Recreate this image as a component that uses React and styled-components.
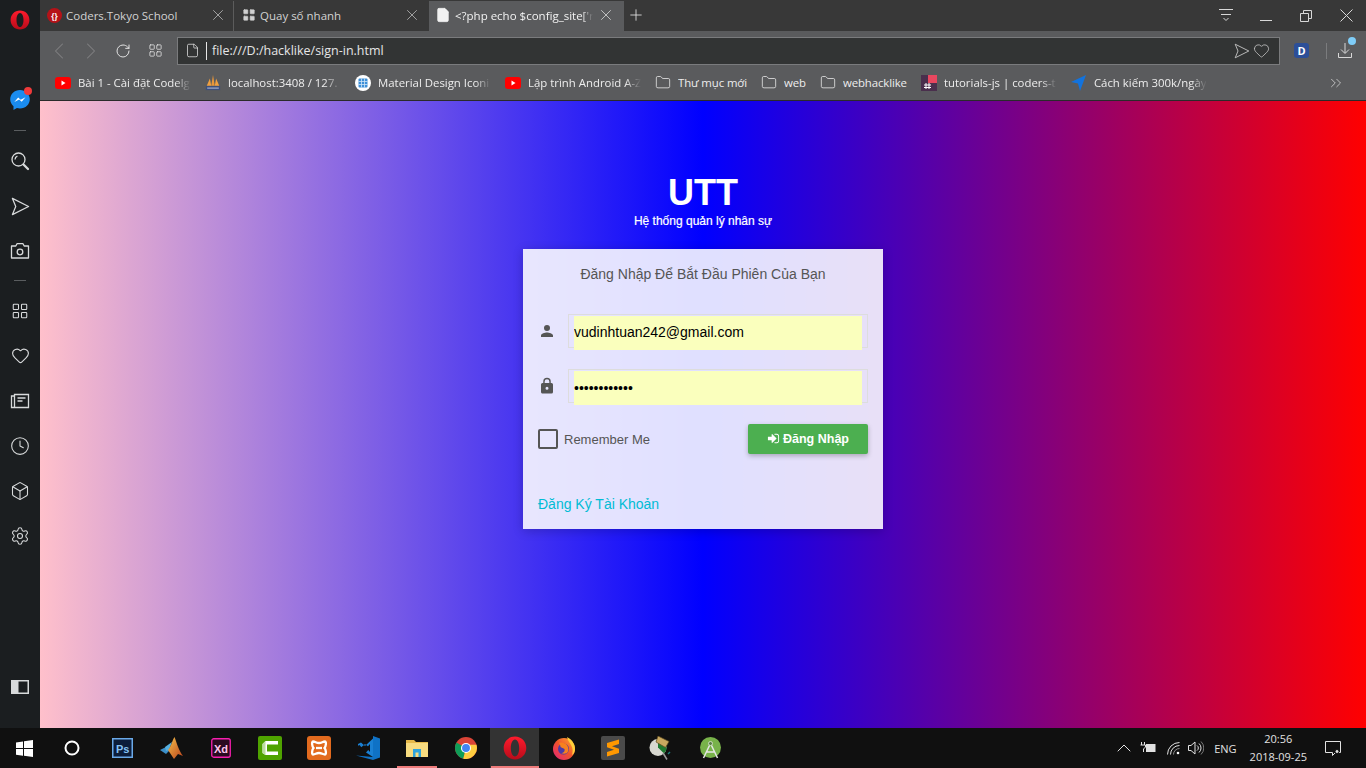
import React from 'react';
import styled, { createGlobalStyle } from 'styled-components';
import {
  LayoutGrid, Heart, Clock, Box, Settings, ChevronLeft, ChevronRight,
  RotateCw, File, Folder, X, Plus, ChevronsRight, ChevronUp,
} from 'lucide-react';

const GlobalStyle = createGlobalStyle`
  html, body {
    margin: 0;
    padding: 0;
    width: 1366px;
    height: 768px;
    overflow: hidden;
    background: #101010;
  }
  * { box-sizing: border-box; }
`;

const UI_FONT = `"Open Sans", "Noto Sans", sans-serif`;
const PAGE_FONT = `"Liberation Sans", Arial, sans-serif`;

const Desktop = styled.div`
  display: grid;
  grid-template-columns: 40px 1fr;
  grid-template-rows: 728px 40px;
  width: 1366px;
  height: 768px;
`;

/* ---------- opera sidebar ---------- */
const Sidebar = styled.aside`
  display: flex;
  flex-direction: column;
  align-items: center;
  background: #1b1e20;
  color: #d8dadb;
  padding-top: 6px;
`;
const SideSlot = styled.div`
  position: relative;
  display: flex;
  align-items: center;
  justify-content: center;
  width: 40px;
  height: ${(p) => p.$h || 45}px;
  margin-top: ${(p) => p.$mt || 0}px;
`;
const SideRule = styled.div`
  width: 12px;
  height: 1px;
  background: #5a5d5f;
  margin: ${(p) => p.$m || '0'};
`;
const Dot = styled.span`
  position: absolute;
  top: ${(p) => p.$top}px;
  left: ${(p) => p.$left}px;
  width: ${(p) => p.$size}px;
  height: ${(p) => p.$size}px;
  border-radius: 50%;
  background: ${(p) => p.$color};
`;
const SideSpacer = styled.div`
  flex: 1;
`;

const OperaLogo = ({ size = 20, id = 'op' }) => (
  <svg width={size} height={size} viewBox="0 0 20 20">
    <defs>
      <linearGradient id={id} x1="0" y1="0" x2="0" y2="1">
        <stop offset="0" stopColor="#ff1b2d" />
        <stop offset="1" stopColor="#b80c1a" />
      </linearGradient>
    </defs>
    <path
      fillRule="evenodd"
      fill={`url(#${id})`}
      d="M10 .5C4.600.5.600 4.700.600 10s4 9.500 9.400 9.500 9.400-4.200 9.400-9.500S15.400.5 10 .5zm0 2.400c2.100 0 3.500 3.100 3.500 7.100s-1.400 7.100-3.500 7.100S6.500 14 6.500 10 7.900 2.900 10 2.900z"
    />
  </svg>
);

const Messenger = () => (
  <svg width="20" height="20" viewBox="0 0 20 20">
    <path fill="#1a8cf0" d="M10 0C4.500 0 .2 4.100.2 9.300c0 2.800 1.200 5.200 3.300 6.900V20l3.400-1.900c1 .3 2 .4 3.100.4 5.500 0 9.800-4.100 9.800-9.200S15.500 0 10 0z" />
    <path fill="#fff" d="M4.300 12l3.900-4.500 2.500 2.200 4.800-2.500-3.800 4.500-2.500-2.200z" />
  </svg>
);

const SideSearch = () => (
  <svg width="20" height="20" viewBox="0 0 20 20" fill="none" stroke="currentColor" strokeWidth="1.300">
    <circle cx="8.500" cy="8.500" r="6.500" />
    <path d="M5 8.500a3.600 3.600 0 0 1 2.400-3.300" />
    <path d="M13.500 13.500l4.500 4.500" strokeWidth="2.300" strokeLinecap="round" />
  </svg>
);

const PlaneOutline = ({ size = 19, width = 1.3 }) => (
  <svg width={size} height={size} viewBox="0 0 20 20" fill="none" stroke="currentColor" strokeWidth={width} strokeLinejoin="round">
    <path d="M1.500 1.500L18.500 10 1.500 18.500 5 10z" />
  </svg>
);

const SideCamera = () => (
  <svg width="20" height="20" viewBox="0 0 20 20" fill="none" stroke="currentColor" strokeWidth="1.300" strokeLinejoin="round">
    <path d="M1.500 5h4.300L7 2.700h6L14.200 5h4.300v12h-17z" />
    <circle cx="10" cy="11" r="2.800" />
  </svg>
);

const SideNews = () => (
  <svg width="20" height="20" viewBox="0 0 20 20" fill="none" stroke="currentColor" strokeWidth="1.300">
    <path d="M4.500 5V3.500h14v13h-17V5h3v11.500" />
    <path d="M7.500 7h8M7.500 10h5" />
  </svg>
);

const SidePanel = () => (
  <svg width="18" height="14" viewBox="0 0 18 14">
    <rect x=".75" y=".75" width="16.500" height="12.500" fill="none" stroke="currentColor" strokeWidth="1.500" />
    <rect x="1" y="1" width="6.500" height="12" fill="currentColor" />
  </svg>
);

/* ---------- browser chrome ---------- */
const Browser = styled.div`
  display: flex;
  flex-direction: column;
  min-width: 0;
  font-family: ${UI_FONT};
`;
const TabBar = styled.div`
  display: flex;
  align-items: flex-end;
  height: 31px;
  background: #383838;
  color: #d6d6d6;
`;
const Tab = styled.div`
  display: flex;
  align-items: center;
  gap: 4px;
  width: ${(p) => p.$w}px;
  height: 30px;
  padding: 0 ${(p) => p.$pr}px 2px ${(p) => p.$pl}px;
  font-size: 11.500px;
  color: ${(p) => (p.$active ? '#f2f2f2' : '#d2d2d2')};
  background: ${(p) => (p.$active ? '#5a5b5d' : 'transparent')};
  border-right: ${(p) => (p.$sep ? '1px solid #5c5c5c' : '0')};
  white-space: nowrap;
`;
const TabTitle = styled.span`
  flex: 1;
  overflow: hidden;
  min-width: 0;
  ${(p) => p.$fade && 'mask-image: linear-gradient(to right, #000 92%, transparent);'}
`;
const OperaFavicon = styled.span`
  display: flex;
  align-items: center;
  justify-content: center;
  width: 15px;
  height: 15px;
  border-radius: 50%;
  background: #b51218;
  color: #fff;
  font-size: 8px;
  font-weight: 700;
`;
const NewTab = styled.div`
  display: flex;
  align-items: center;
  margin-left: 3px;
  padding-bottom: 2px;
  height: 30px;
  color: #e8e8e8;
`;
const TabSpacer = styled.div`
  flex: 1;
`;
const WindowControls = styled.div`
  display: flex;
  align-items: center;
  height: 30px;
  padding-bottom: 1px;
  color: #d8d8d8;
`;
const WinButton = styled.div`
  display: flex;
  align-items: center;
  justify-content: center;
  width: 40px;
`;

const Toolbar = styled.div`
  display: flex;
  align-items: center;
  height: 39px;
  background: #5a5b5d;
  padding-left: 3px;
  color: #8a8b8d;
`;
const NavButton = styled.div`
  display: flex;
  align-items: center;
  justify-content: center;
  width: ${(p) => p.$w || 32}px;
  color: ${(p) => p.$color || '#808183'};
`;
const AddressBar = styled.div`
  display: flex;
  align-items: center;
  width: 1103px;
  height: 28px;
  margin-left: 6px;
  padding: 0 9px 0 7px;
  background: #323434;
  border: 1px solid #7a7b7d;
  color: #e6e6e6;
  font-size: 12.500px;
`;
const Caret = styled.span`
  width: 1px;
  height: 18px;
  background: #e6e6e6;
  margin: 0 5px 0 6px;
`;
const UrlText = styled.span`
  flex: 1;
`;
const AddrIcons = styled.div`
  display: flex;
  align-items: center;
  gap: 3px;
  color: #c9c9c9;
`;
const ProfileBadge = styled.div`
  display: flex;
  align-items: center;
  justify-content: center;
  width: 15px;
  height: 15px;
  margin-left: 14px;
  border-radius: 3px;
  background: #2c4f98;
  color: #fff;
  font-size: 11px;
  font-weight: 700;
`;
const ToolRule = styled.span`
  width: 1px;
  height: 16px;
  background: #7b7c7e;
  margin: 0 11px 0 17px;
`;
const DownloadSlot = styled.div`
  position: relative;
  display: flex;
  color: #d8d8d8;
`;

const BookmarkBar = styled.div`
  display: flex;
  align-items: center;
  gap: 14px;
  height: 31px;
  padding: 0 0 5px 15px;
  background: #5a5b5d;
  border-bottom: 1px solid #2a2a2a;
  color: #ededed;
  font-size: 11.400px;
`;
const Bookmark = styled.div`
  display: flex;
  align-items: center;
  gap: 7px;
  white-space: nowrap;
`;
const BookmarkIcon = styled.span`
  display: flex;
  align-items: center;
  justify-content: center;
  width: 16px;
  height: 16px;
  color: #e8e8e8;
`;
const BookmarkText = styled.span`
  display: block;
  overflow: hidden;
  width: ${(p) => (p.$fade ? '113px' : 'auto')};
  letter-spacing: ${(p) => (p.$fade ? '0' : '-0.1px')};
  ${(p) => p.$fade && 'mask-image: linear-gradient(to right, #000 86%, transparent);'}
`;
const MoreButton = styled.div`
  display: flex;
  margin-left: auto;
  margin-right: 21px;
  color: #dedede;
`;

/* ---------- the sign-in page ---------- */
const Page = styled.main`
  flex: 1;
  display: flex;
  flex-direction: column;
  align-items: center;
  padding-top: 73px;
  background: linear-gradient(to right, #ffc0cb, #0000ff, #ff0000);
  font-family: ${PAGE_FONT};
`;
const Logo = styled.div`
  color: #fff;
  font-size: 36px;
  font-weight: 700;
  line-height: 38px;
`;
const Tagline = styled.div`
  color: #fff;
  font-size: 12px;
  line-height: 16px;
  margin-top: 1px;
  -webkit-text-stroke: 0.2px #fff;
`;
const Card = styled.form`
  width: 360px;
  height: 280px;
  margin-top: 20px;
  padding: 15px;
  background: rgba(255, 255, 255, 0.88);
  box-shadow: 0 2px 10px rgba(0, 0, 0, 0.2);
  display: flex;
  flex-direction: column;
`;
const Message = styled.div`
  color: #555;
  font-size: 14px;
  line-height: 20px;
  text-align: center;
`;
const Field = styled.div`
  display: flex;
  align-items: center;
  margin-top: ${(p) => p.$mt}px;
`;
const FieldIcon = styled.span`
  display: flex;
  width: 18px;
  margin-right: 12px;
  color: #555;
`;
const InputWrap = styled.div`
  width: 300px;
  height: 34px;
  padding: 1px 5px 0;
  border: 1px solid #dddddd;
`;
const Input = styled.input`
  display: block;
  width: 100%;
  height: 34px;
  padding: 0 0 ${(p) => p.$pb || 0}px;
  border: 0;
  outline: 0;
  background: #faffbd;
  color: #000;
  font-family: ${PAGE_FONT};
  font-size: 14px;
`;
const ActionRow = styled.div`
  display: flex;
  align-items: center;
  justify-content: space-between;
  margin-top: 21px;
`;
const RememberLabel = styled.label`
  display: flex;
  align-items: center;
  gap: 6px;
  color: #555;
  font-size: 13px;
`;
const CheckBox = styled.span`
  width: 20px;
  height: 20px;
  border: 2px solid #555;
  border-radius: 2px;
`;
const SubmitButton = styled.button`
  display: flex;
  align-items: center;
  justify-content: center;
  gap: 3px;
  width: 120px;
  height: 30px;
  padding: 0 0 1px;
  border: 0;
  border-radius: 2px;
  background: #4caf50;
  box-shadow: 0 2px 5px rgba(0, 0, 0, 0.26);
  color: #fff;
  font-family: ${PAGE_FONT};
  font-size: 12.500px;
  font-weight: 700;
`;
const RegisterLink = styled.a`
  margin-top: 40px;
  color: #00bcd4;
  font-size: 14px;
  line-height: 20px;
`;

/* ---------- windows taskbar ---------- */
const Taskbar = styled.footer`
  grid-column: 1 / 3;
  display: flex;
  align-items: stretch;
  background: #101010;
  color: #e4e4e4;
  font-family: ${UI_FONT};
`;
const TaskStart = styled.div`
  display: flex;
  align-items: center;
  justify-content: center;
  width: 48px;
`;
const TaskApps = styled.div`
  display: flex;
  margin-left: 2px;
`;
const TaskSlot = styled.div`
  position: relative;
  display: flex;
  align-items: center;
  justify-content: center;
  width: 49px;
  background: ${(p) => (p.$open ? '#333' : 'transparent')};
  &::after {
    content: '';
    display: ${(p) => (p.$run ? 'block' : 'none')};
    position: absolute;
    bottom: 0;
    left: ${(p) => (p.$open ? 1 : 5)}px;
    right: ${(p) => (p.$open ? 0 : 4)}px;
    height: 2px;
    background: #ee7b7b;
  }
`;
const Tray = styled.div`
  display: flex;
  align-items: center;
  margin-left: auto;
  padding-right: 25px;
  color: #e2e2e2;
  font-size: 11px;
`;
const TrayIcon = styled.span`
  display: flex;
  margin-left: ${(p) => p.$ml}px;
`;
const TrayText = styled.span`
  margin-left: ${(p) => p.$ml}px;
`;
const ClockBox = styled.div`
  display: flex;
  flex-direction: column;
  align-items: center;
  margin-left: 13px;
  line-height: 18px;
`;

const Yt = () => (
  <svg width="16" height="12" viewBox="0 0 16 12">
    <rect width="16" height="12" rx="3" fill="#f00" />
    <path d="M6.500 3.500v5l4-2.500z" fill="#fff" />
  </svg>
);

const folder = <Folder size={17} strokeWidth={1.2} />;

const bookmarks = [
  { text: 'Bài 1 - Cài đặt Codelg', icon: <Yt />, fade: true },
  {
    text: 'localhost:3408 / 127.',
    fade: true,
    icon: (
      <svg width="18" height="18" viewBox="0 0 18 18">
        <path d="M9 0l2 12H7z" fill="#e8963a" />
        <path d="M5.500 4L7 12H2zM12.500 4L16 12h-5z" fill="#f0a040" />
        <rect x="1" y="12.500" width="16" height="4.500" fill="#3c4f7c" />
        <path d="M2.500 14h13v1.500h-13z" fill="#9aa4c2" />
      </svg>
    ),
  },
  {
    text: 'Material Design Iconi',
    fade: true,
    icon: (
      <svg width="16" height="16" viewBox="0 0 16 16">
        <circle cx="8" cy="8" r="8" fill="#fff" />
        <rect x="3.500" y="3.500" width="9" height="9" rx="1" fill="#3d8fd8" />
        <path d="M6.500 3.500v9M9.500 3.500v9M3.500 6.500h9M3.500 9.500h9" stroke="#cfe4f6" strokeWidth=".8" />
      </svg>
    ),
  },
  { text: 'Lập trình Android A-Z', icon: <Yt />, fade: true },
  { text: 'Thư mục mới', icon: folder },
  { text: 'web', icon: folder },
  { text: 'webhacklike', icon: folder },
  {
    text: 'tutorials-js | coders-t',
    fade: true,
    icon: (
      <svg width="16" height="16" viewBox="0 0 16 16">
        <rect width="16" height="16" fill="#4a2f4d" />
        <rect x="7" y="0" width="9" height="8" fill="#e8475f" />
        <path d="M5 8v6M8 8v6M3 10h7M3 12.500h7" stroke="#fff" />
      </svg>
    ),
  },
  {
    text: 'Cách kiếm 300k/ngày',
    fade: true,
    icon: (
      <svg width="16" height="16" viewBox="0 0 16 16">
        <path d="M15 0L0 7l7 1.500L9 16z" fill="#1273de" />
      </svg>
    ),
  },
];

const taskIcons = [
  <svg key="ps" width="21" height="20" viewBox="0 0 21 20">
    <rect x=".75" y=".75" width="19.500" height="18.500" fill="#0c1d3a" stroke="#6aa9e8" strokeWidth="1.500" />
    <text x="4" y="14.500" fontSize="11" fontWeight="700" fill="#86c2f5" fontFamily="Liberation Sans">Ps</text>
  </svg>,
  <svg key="ml" width="23" height="22" viewBox="0 0 23 22">
    <defs>
      <linearGradient id="mlg" x1="0" y1="0" x2="1" y2="1">
        <stop offset="0" stopColor="#f7c14a" />
        <stop offset="1" stopColor="#b8401a" />
      </linearGradient>
    </defs>
    <path d="M0 13l6-3 4 3-4 4z" fill="#3b8ec8" />
    <path d="M5 10l7-5-3 8-3 1z" fill="#56b0e0" />
    <path d="M14.500 0c2 5 4 13 8.500 19l-5-2-4 5-6-9c3-3 4-9 6.500-13z" fill="url(#mlg)" />
  </svg>,
  <svg key="xd" width="20" height="20" viewBox="0 0 20 20">
    <rect x=".75" y=".75" width="18.500" height="18.500" rx="2" fill="#2a0a20" stroke="#f71fb0" strokeWidth="1.300" />
    <text x="3" y="14.500" fontSize="11" fontWeight="700" fill="#ffc6ec" fontFamily="Liberation Sans">Xd</text>
  </svg>,
  <svg key="cm" width="24" height="24" viewBox="0 0 24 24">
    <rect width="24" height="24" rx="2" fill="#4fa300" />
    <path d="M20 5H7.500L4.500 8v9l3 2H20v-3.500H9v-7h11z" fill="#fff" />
    <path d="M7.500 5L4.500 8v9l3 2z" fill="#bcdca0" />
  </svg>,
  <svg key="xa" width="24" height="24" viewBox="0 0 24 24">
    <rect width="24" height="24" rx="3" fill="#e26a1e" />
    <g fill="none" stroke="#fff" strokeWidth="2.300">
      <path d="M6 5.500c2.500 0 3 1.500 6 1.500s3.500-1.500 6-1.500c1.500 0 1 5-.5 6.500 1.500 1.500 2 6.500.5 6.500-2.500 0-3-1.500-6-1.500s-3.500 1.500-6 1.500c-1.500 0-1-5 .5-6.500C5 10.500 4.500 5.500 6 5.500z" />
      <path d="M9 12h6" />
    </g>
  </svg>,
  <svg key="vs" width="24" height="24" viewBox="0 0 24 24">
    <path d="M17 0l7 2.500v19L17 24 0 19.500l17 1.500z" fill="#0f72c6" />
    <path d="M17 2.500v18.500l-7-4.500 4-4.500-5-4-4 3.500-3-1.500V8l3-1.500L9 10z" fill="#1a80d4" />
    <path d="M3.500 9L1.500 10v4l2 1 2.500-3z" fill="#101010" />
    <path d="M14 8l-3.500 4 3.500 4z" fill="#101010" />
  </svg>,
  <svg key="ex" width="22" height="18" viewBox="0 0 22 18">
    <path d="M0 1h8l2 2h12v3H0z" fill="#e6b94a" />
    <rect x="0" y="4" width="22" height="14" fill="#f8dc80" />
    <path d="M7 10h8v8h-2.500v-4.500h-3V18H7z" fill="#2fa4dc" />
  </svg>,
  <svg key="ch" width="22" height="22" viewBox="0 0 24 24">
    <circle cx="12" cy="12" r="12" fill="#db4437" />
    <path d="M12 12L1.600 6A12 12 0 0 0 9 23.600z" fill="#0f9d58" />
    <path d="M12 12l-3 11.600A12 12 0 0 0 23.400 8.500H12z" fill="#ffcd40" />
    <circle cx="12" cy="12" r="5.500" fill="#fff" />
    <circle cx="12" cy="12" r="4.300" fill="#4285f4" />
  </svg>,
  <OperaLogo key="op" size={24} id="opTask" />,
  <svg key="ff" width="22" height="23" viewBox="0 0 22 23">
    <defs>
      <linearGradient id="ffg" x1="0" y1="1" x2="1" y2="0">
        <stop offset="0" stopColor="#e0217c" />
        <stop offset=".5" stopColor="#f0532c" />
        <stop offset="1" stopColor="#ffb02e" />
      </linearGradient>
    </defs>
    <circle cx="11" cy="12" r="11" fill="url(#ffg)" />
    <path d="M14 0c6 3 8 8 8 12 0 2-1 5-3 6 1-3 1-7-1-10-1-2-3-4-4-8z" fill="#ffcf3a" />
    <circle cx="10.500" cy="12" r="5.500" fill="#4a3aa8" />
    <path d="M6 6c3-1 6 0 8 2 2 3 2 6 0 8-2 1-4 1-6 0 3 0 4-2 3.500-4-1-1-3-1-4-2 0-2-1-3-1.500-4z" fill="#f7811e" />
  </svg>,
  <svg key="st" width="24" height="24" viewBox="0 0 24 24">
    <rect width="24" height="24" rx="2" fill="#4a4a4a" />
    <path d="M18 5v4.500l-7 2.300 7 2.400v4.300L6 22v-4.500l7-2.200-7-2.600V8.500z" fill="#ff9800" transform="translate(0 -1.500)" />
  </svg>,
  <svg key="un" width="27" height="24" viewBox="0 0 27 24">
    <circle cx="10" cy="11.500" r="8.500" fill="#d8d8d0" />
    <path d="M10 3a8.500 8.500 0 0 1 6 14.500l-6-6z" fill="#1f7a30" />
    <path d="M10 0l11 5.500-3.500 6L8 6z" fill="#c9a860" stroke="#5c4a20" strokeWidth=".7" />
    <path d="M15 17l4 6.500" stroke="#9a9a9a" strokeWidth="1.500" />
    <path d="M20 18l2-2" stroke="#1c7f7f" strokeWidth="1.500" />
  </svg>,
  <svg key="an" width="21" height="22" viewBox="0 0 21 22">
    <circle cx="10.500" cy="10.500" r="10.500" fill="#78b24a" />
    <circle cx="10.500" cy="6.500" r="2" fill="#5b7d47" stroke="#dfe8d6" strokeWidth=".8" />
    <path d="M9.500 8.500L3.500 21M11.500 8.500l6 12.500M6.500 15h8" stroke="#e6e6e6" strokeWidth="1.500" fill="none" />
  </svg>,
];

export default function App() {
  return (
    <Desktop>
      <GlobalStyle />
      <Sidebar>
        <SideSlot $h={28}>
          <OperaLogo id="opSide" />
        </SideSlot>
        <SideSlot $h={40} $mt={46}>
          <Messenger />
          <Dot $top={7} $left={24} $size={8} $color="#f03a3a" />
        </SideSlot>
        <SideRule $m="10px 0 0" />
        <SideSlot $mt={7} $h={46}><SideSearch /></SideSlot>
        <SideSlot><PlaneOutline /></SideSlot>
        <SideSlot $h={44}><SideCamera /></SideSlot>
        <SideRule $m="7px 0 0" />
        <SideSlot $mt={7}><LayoutGrid size={18} strokeWidth={1.4} /></SideSlot>
        <SideSlot><Heart size={19} strokeWidth={1.4} /></SideSlot>
        <SideSlot><SideNews /></SideSlot>
        <SideSlot><Clock size={20} strokeWidth={1.3} /></SideSlot>
        <SideSlot><Box size={20} strokeWidth={1.3} /></SideSlot>
        <SideSlot><Settings size={20} strokeWidth={1.3} /></SideSlot>
        <SideSpacer />
        <SideSlot $h={30}><SidePanel /></SideSlot>
        <SideSlot $h={26} />
      </Sidebar>

      <Browser>
        <TabBar>
          <Tab $w={194} $pl={7} $pr={6} $sep>
            <OperaFavicon>{'{}'}</OperaFavicon>
            <TabTitle>Coders.Tokyo School</TabTitle>
            <X size={18} strokeWidth={0.9} />
          </Tab>
          <Tab $w={195} $pl={8} $pr={8}>
            <LayoutGrid size={14} fill="#d2d2d2" strokeWidth={1} />
            <TabTitle>Quay số nhanh</TabTitle>
            <X size={18} strokeWidth={0.9} />
          </Tab>
          <Tab $w={195} $pl={6} $pr={9} $active>
            <File size={16} fill="#f2f2f2" strokeWidth={1} />
            <TabTitle $fade>{"<?php echo $config_site['r"}</TabTitle>
            <X size={18} strokeWidth={0.9} />
          </Tab>
          <NewTab><Plus size={18} strokeWidth={1.1} /></NewTab>
          <TabSpacer />
          <WindowControls>
            <WinButton>
              <svg width="14" height="13" viewBox="0 0 14 13" fill="none" stroke="currentColor">
                <path d="M0 .5h14M2 5.500h10M4.500 9l2.500 2.500L9.500 9" />
              </svg>
            </WinButton>
            <WinButton>
              <svg width="12" height="12" viewBox="0 0 12 12" fill="none" stroke="currentColor">
                <path d="M0 10.500h12" />
              </svg>
            </WinButton>
            <WinButton>
              <svg width="12" height="12" viewBox="0 0 12 12" fill="none" stroke="currentColor">
                <path d="M.5 3.500h8v8h-8zM3.500 3.500v-3h8v8h-3" />
              </svg>
            </WinButton>
            <WinButton>
              <svg width="13" height="13" viewBox="0 0 13 13" fill="none" stroke="currentColor">
                <path d="M.5.500l12 12M12.500.500l-12 12" />
              </svg>
            </WinButton>
          </WindowControls>
        </TabBar>

        <Toolbar>
          <NavButton><ChevronLeft size={28} strokeWidth={0.9} /></NavButton>
          <NavButton><ChevronRight size={28} strokeWidth={0.9} /></NavButton>
          <NavButton $color="#e2e2e2"><RotateCw size={16} strokeWidth={1.5} /></NavButton>
          <NavButton $color="#e2e2e2"><LayoutGrid size={15} strokeWidth={1.3} /></NavButton>
          <AddressBar>
            <File size={15} strokeWidth={1.2} />
            <Caret />
            <UrlText>file:///D:/hacklike/sign-in.html</UrlText>
            <AddrIcons>
              <PlaneOutline size={16} width={1.1} />
              <Heart size={17} strokeWidth={1.1} />
            </AddrIcons>
          </AddressBar>
          <ProfileBadge>D</ProfileBadge>
          <ToolRule />
          <DownloadSlot>
            <svg width="14" height="15" viewBox="0 0 14 15" fill="none" stroke="currentColor">
              <path d="M7 0v10M3 6.500l4 4 4-4M.5 10v4.500h13V10" />
            </svg>
            <Dot $top={-6} $left={10} $size={8} $color="#7fcdf8" />
          </DownloadSlot>
        </Toolbar>

        <BookmarkBar>
          {bookmarks.map((b) => (
            <Bookmark key={b.text}>
              <BookmarkIcon>{b.icon}</BookmarkIcon>
              <BookmarkText $fade={b.fade}>{b.text}</BookmarkText>
            </Bookmark>
          ))}
          <MoreButton><ChevronsRight size={18} strokeWidth={1} /></MoreButton>
        </BookmarkBar>

        <Page>
          <Logo>UTT</Logo>
          <Tagline>Hệ thống quản lý nhân sự</Tagline>
          <Card>
            <Message>Đăng Nhập Để Bắt Đầu Phiên Của Bạn</Message>
            <Field $mt={30}>
              <FieldIcon>
                <svg width="18" height="18" viewBox="0 0 24 24" fill="currentColor">
                  <path d="M12 12a4 4 0 1 0 0-8 4 4 0 0 0 0 8zm0 2c-2.700 0-8 1.300-8 4v2h16v-2c0-2.700-5.300-4-8-4z" />
                </svg>
              </FieldIcon>
              <InputWrap>
                <Input type="text" value="vudinhtuan242@gmail.com" readOnly $pb={2} />
              </InputWrap>
            </Field>
            <Field $mt={21}>
              <FieldIcon>
                <svg width="18" height="18" viewBox="0 0 24 24" fill="currentColor">
                  <path d="M18 8h-1V6A5 5 0 0 0 7 6v2H6a2 2 0 0 0-2 2v10c0 1.100.9 2 2 2h12a2 2 0 0 0 2-2V10a2 2 0 0 0-2-2zm-6 9a2 2 0 1 1 0-4 2 2 0 0 1 0 4zm3.100-9H8.900V6a3.100 3.100 0 0 1 6.200 0z" />
                </svg>
              </FieldIcon>
              <InputWrap>
                <Input type="password" value="tuan24200000" readOnly />
              </InputWrap>
            </Field>
            <ActionRow>
              <RememberLabel>
                <CheckBox />
                Remember Me
              </RememberLabel>
              <SubmitButton type="button">
                <svg width="13" height="13" viewBox="0 0 1792 1792" fill="currentColor">
                  <path d="M1312 896q0 26-19 45l-544 544q-19 19-45 19t-45-19-19-45v-288H192q-26 0-45-19t-19-45V704q0-26 19-45t45-19h448V352q0-26 19-45t45-19 45 19l544 544q19 19 19 45zm352-352v704q0 119-84.500 203.500T1376 1536h-320q-13 0-22.500-9.500T1024 1504q0-4-1-20t-.5-26.500 3-23.500 10-19.500 20.500-6.500h320q66 0 113-47t47-113V544q0-66-47-113t-113-47h-312l-11.500-1-11.500-3-8-5.500-7-9-2-13.500q0-4-1-20t-.5-26.500 3-23.500 10-19.500 20.500-6.500h320q119 0 203.500 84.500T1664 544z" />
                </svg>
                Đăng Nhập
              </SubmitButton>
            </ActionRow>
            <RegisterLink>Đăng Ký Tài Khoản</RegisterLink>
          </Card>
        </Page>
      </Browser>

      <Taskbar>
        <TaskStart>
          <svg width="17" height="17" viewBox="0 0 17 17" fill="#fff">
            <path d="M0 2.400l7-1v6.700H0zM8 1.300L17 0v8.100H8zM0 9h7v6.700l-7-1zM8 9h9v8l-9-1.300z" />
          </svg>
        </TaskStart>
        <TaskStart>
          <svg width="16" height="16" viewBox="0 0 16 16" fill="none" stroke="#fff" strokeWidth="2">
            <circle cx="8" cy="8" r="6.500" />
          </svg>
        </TaskStart>
        <TaskApps>
          {taskIcons.map((icon, i) => (
            <TaskSlot key={i} $run={i === 6 || i === 8} $open={i === 8}>
              {icon}
            </TaskSlot>
          ))}
        </TaskApps>
        <Tray>
          <TrayIcon $ml={0}><ChevronUp size={24} strokeWidth={1} /></TrayIcon>
          <TrayIcon $ml={4}>
            <svg width="16" height="12" viewBox="0 0 16 12" fill="none" stroke="currentColor">
              <path d="M1.500 0v3M4.500 0v3M.5 3h5v2l-2 2v3" />
              <rect x="6.500" y="2.500" width="8.500" height="7" fill="#e2e2e2" />
            </svg>
          </TrayIcon>
          <TrayIcon $ml={11}>
            <svg width="13" height="13" viewBox="0 0 13 13" fill="none" stroke="currentColor">
              <path d="M.5 12.500a12 12 0 0 1 12-12M3.500 12.500a9 9 0 0 1 9-9" />
              <path d="M6.500 12.500a6 6 0 0 1 6-6" stroke="#8a8a8a" />
              <circle cx="11" cy="11" r="1.300" fill="#fff" stroke="none" />
            </svg>
          </TrayIcon>
          <TrayIcon $ml={8}>
            <svg width="16" height="14" viewBox="0 0 16 14" fill="none" stroke="currentColor">
              <path d="M.5 4.500h2.500L7 1v12L3 9.500H.5z" />
              <path d="M9 4.500a3 3 0 0 1 0 5M11 2.500a6 6 0 0 1 0 9" />
              <path d="M13 .5a9 9 0 0 1 0 13" stroke="#7a7a7a" />
            </svg>
          </TrayIcon>
          <TrayText $ml={10}>ENG</TrayText>
          <ClockBox>
            <span>20:56</span>
            <span>2018-09-25</span>
          </ClockBox>
          <TrayIcon $ml={18}>
            <svg width="16" height="16" viewBox="0 0 16 16" fill="none" stroke="currentColor">
              <path d="M.5 1.500h15v11h-5l-3 3v-3h-7z" />
              <circle cx="12" cy="11.500" r="2" fill="#e2e2e2" stroke="#101010" />
            </svg>
          </TrayIcon>
        </Tray>
      </Taskbar>
    </Desktop>
  );
}
